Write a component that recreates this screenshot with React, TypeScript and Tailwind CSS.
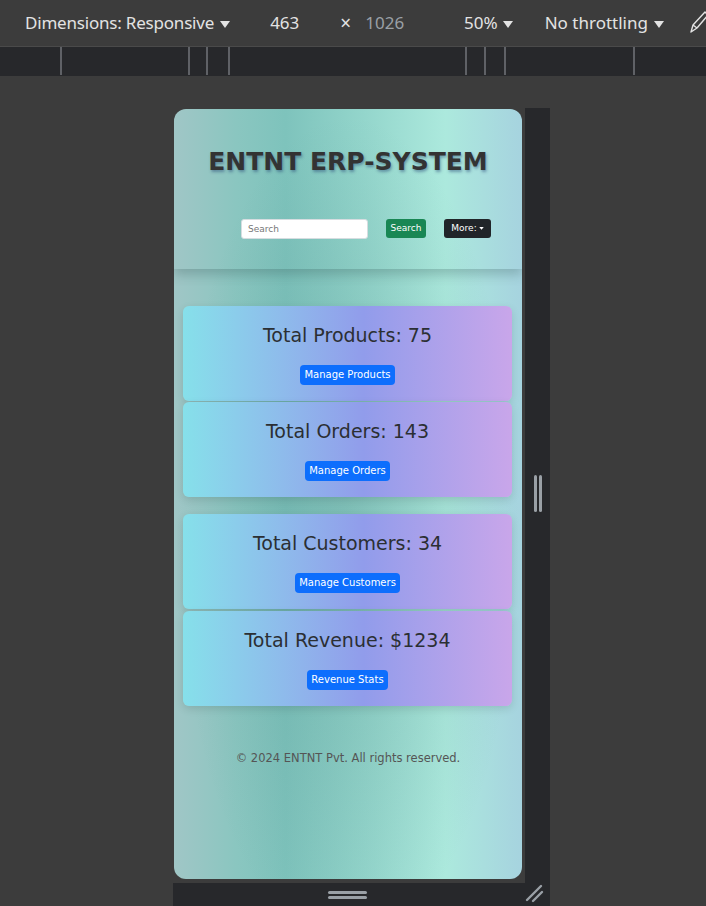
const stats = [
  { label: 'Total Products: 75', action: 'Manage Products' },
  { label: 'Total Orders: 143', action: 'Manage Orders' },
  { label: 'Total Customers: 34', action: 'Manage Customers' },
  { label: 'Total Revenue: $1234', action: 'Revenue Stats' },
];

function Caret() {
  return (
    <svg width="10" height="8" viewBox="0 0 10 8" className="inline-block">
      <path d="M0 0 L10 0 L5 7 Z" fill="#e3e3e3" />
    </svg>
  );
}

function StatCard({ label, action }: { label: string; action: string }) {
  return (
    <div className="h-[95px] rounded-[6px] bg-gradient-to-r from-[#86e0ea] via-[#919ceb] via-55% to-[#c9a6ea] shadow-[0_3px_8px_rgba(0,0,0,0.12)] flex flex-col items-center pt-[16px]">
      <h2 className="text-[19px] leading-[26px] text-[#2b2f33]">{label}</h2>
      <button className="mt-[17px] h-[20px] px-[4px] rounded-[4px] bg-[#0d6efd] text-white text-[10px] leading-[20px]">
        {action}
      </button>
    </div>
  );
}

export default function App() {
  const ticks = [60, 188, 206, 228, 465, 484, 504, 633];

  return (
    <div className="w-[706px] h-[906px] bg-[#3c3c3c] overflow-hidden" style={{ fontFamily: '"Noto Sans", sans-serif' }}>
      {/* devtools toolbar */}
      <div className="h-[47px] flex items-center text-[17px] text-[#e3e3e3] border-b border-[#4a4a4a] whitespace-nowrap">
        <span className="ml-[25px] tracking-[-0.2px]">Dimensions: Responsive</span>
        <span className="ml-[6px]"><Caret /></span>
        <span className="ml-[40px]">463</span>
        <span className="ml-[41px] text-[19px]">×</span>
        <span className="ml-[14px] text-[#9aa0a6]">1026</span>
        <span className="ml-[60px]">50%</span>
        <span className="ml-[5px]"><Caret /></span>
        <span className="ml-[32px]">No throttling</span>
        <span className="ml-[6px]"><Caret /></span>
        <svg width="20" height="26" viewBox="0 0 20 26" className="ml-[25px] shrink-0">
          <path d="M16 2 L19 5 L8 18 L2 22 L4 15 Z M4 15 L8 18" fill="none" stroke="#e3e3e3" strokeWidth="1.4" strokeLinejoin="round" />
        </svg>
      </div>

      {/* ruler */}
      <div className="h-[29px] bg-[#27282b] relative">
        {ticks.map((x) => (
          <div key={x} className="absolute top-0 h-[28px] w-[2px] bg-[#5f6166]" style={{ left: x }} />
        ))}
      </div>

      {/* device frame */}
      <div className="ml-[173px] mt-[32px] w-[377px]">
        <div className="flex">
          <div className="w-[352px] pt-px pl-px pb-[4px]">
            <div
              className="w-[348px] h-[770px] rounded-[12px] overflow-hidden relative bg-[linear-gradient(90deg,#a0c6c6_0%,#8ac6c0_18%,#7ec3bc_32%,#94d6cc_55%,#ace9dd_78%,#a6d3df_100%)]"
              style={{ fontFamily: '"DejaVu Sans", sans-serif' }}
            >
              <div className="absolute inset-0 bg-[radial-gradient(ellipse_at_50%_55%,rgba(40,90,90,0.18),transparent_70%)] pointer-events-none" />
              <div className="relative">
                {/* header */}
                <header className="h-[160px] flex flex-col items-center shadow-[0_6px_10px_rgba(40,70,70,0.25)]">
                  <h1 className="mt-[34px] text-[25px] font-bold text-[#333] tracking-[0px] [text-shadow:1px_2px_3px_rgba(30,60,110,0.45)]">
                    ENTNT ERP-SYSTEM
                  </h1>
                  <div className="mt-[38px] self-start ml-[67px] flex items-center">
                    <input
                      placeholder="Search"
                      className="w-[127px] h-[20px] rounded-[3px] bg-white border border-[#d6dde0] px-[6px] text-[9px] text-[#555] placeholder:text-[#777] outline-none"
                    />
                    <button className="ml-[18px] h-[19px] w-[40px] rounded-[3px] bg-[#198754] text-white text-[9px] font-normal">Search</button>
                    <button className="ml-[18px] h-[19px] w-[47px] rounded-[3px] bg-[#212529] text-white text-[9px] font-normal flex items-center justify-center gap-[2px]">
                      More:
                      <svg width="5" height="3" viewBox="0 0 6 4"><path d="M0 0 L6 0 L3 3.5 Z" fill="#fff" /></svg>
                    </button>
                  </div>
                </header>

                {/* stats */}
                <main className="mt-[37px] pl-[9px] pr-[10px]">
                  <div className="flex flex-col gap-[1px]">
                    <StatCard {...stats[0]} />
                    <StatCard {...stats[1]} />
                  </div>
                  <div className="mt-[17px] flex flex-col gap-[2px]">
                    <StatCard {...stats[2]} />
                    <StatCard {...stats[3]} />
                  </div>
                </main>

                <footer className="mt-[44px] text-center text-[11.5px] text-[#555]">
                  © 2024 ENTNT Pvt. All rights reserved.
                </footer>
              </div>
            </div>
          </div>
          <div className="w-[25px] bg-[#27282b] flex items-center justify-center">
            <div className="flex gap-[2px] -mt-[4px]">
              <div className="w-[3px] h-[37px] rounded-sm bg-[#9aa0a6]" />
              <div className="w-[3px] h-[37px] rounded-sm bg-[#9aa0a6]" />
            </div>
          </div>
        </div>
        <div className="h-[23px] bg-[#27282b] flex items-center relative">
          <div className="ml-[155px] flex flex-col gap-[2px]">
            <div className="w-[39px] h-[3px] rounded-sm bg-[#9aa0a6]" />
            <div className="w-[39px] h-[3px] rounded-sm bg-[#9aa0a6]" />
          </div>
          <svg width="20" height="20" viewBox="0 0 20 20" className="absolute right-[5px] top-[1px]">
            <path d="M2 16 L16 2 M8 17 L17 8" stroke="#9aa0a6" strokeWidth="2.4" strokeLinecap="round" />
          </svg>
        </div>
      </div>
    </div>
  );
}
